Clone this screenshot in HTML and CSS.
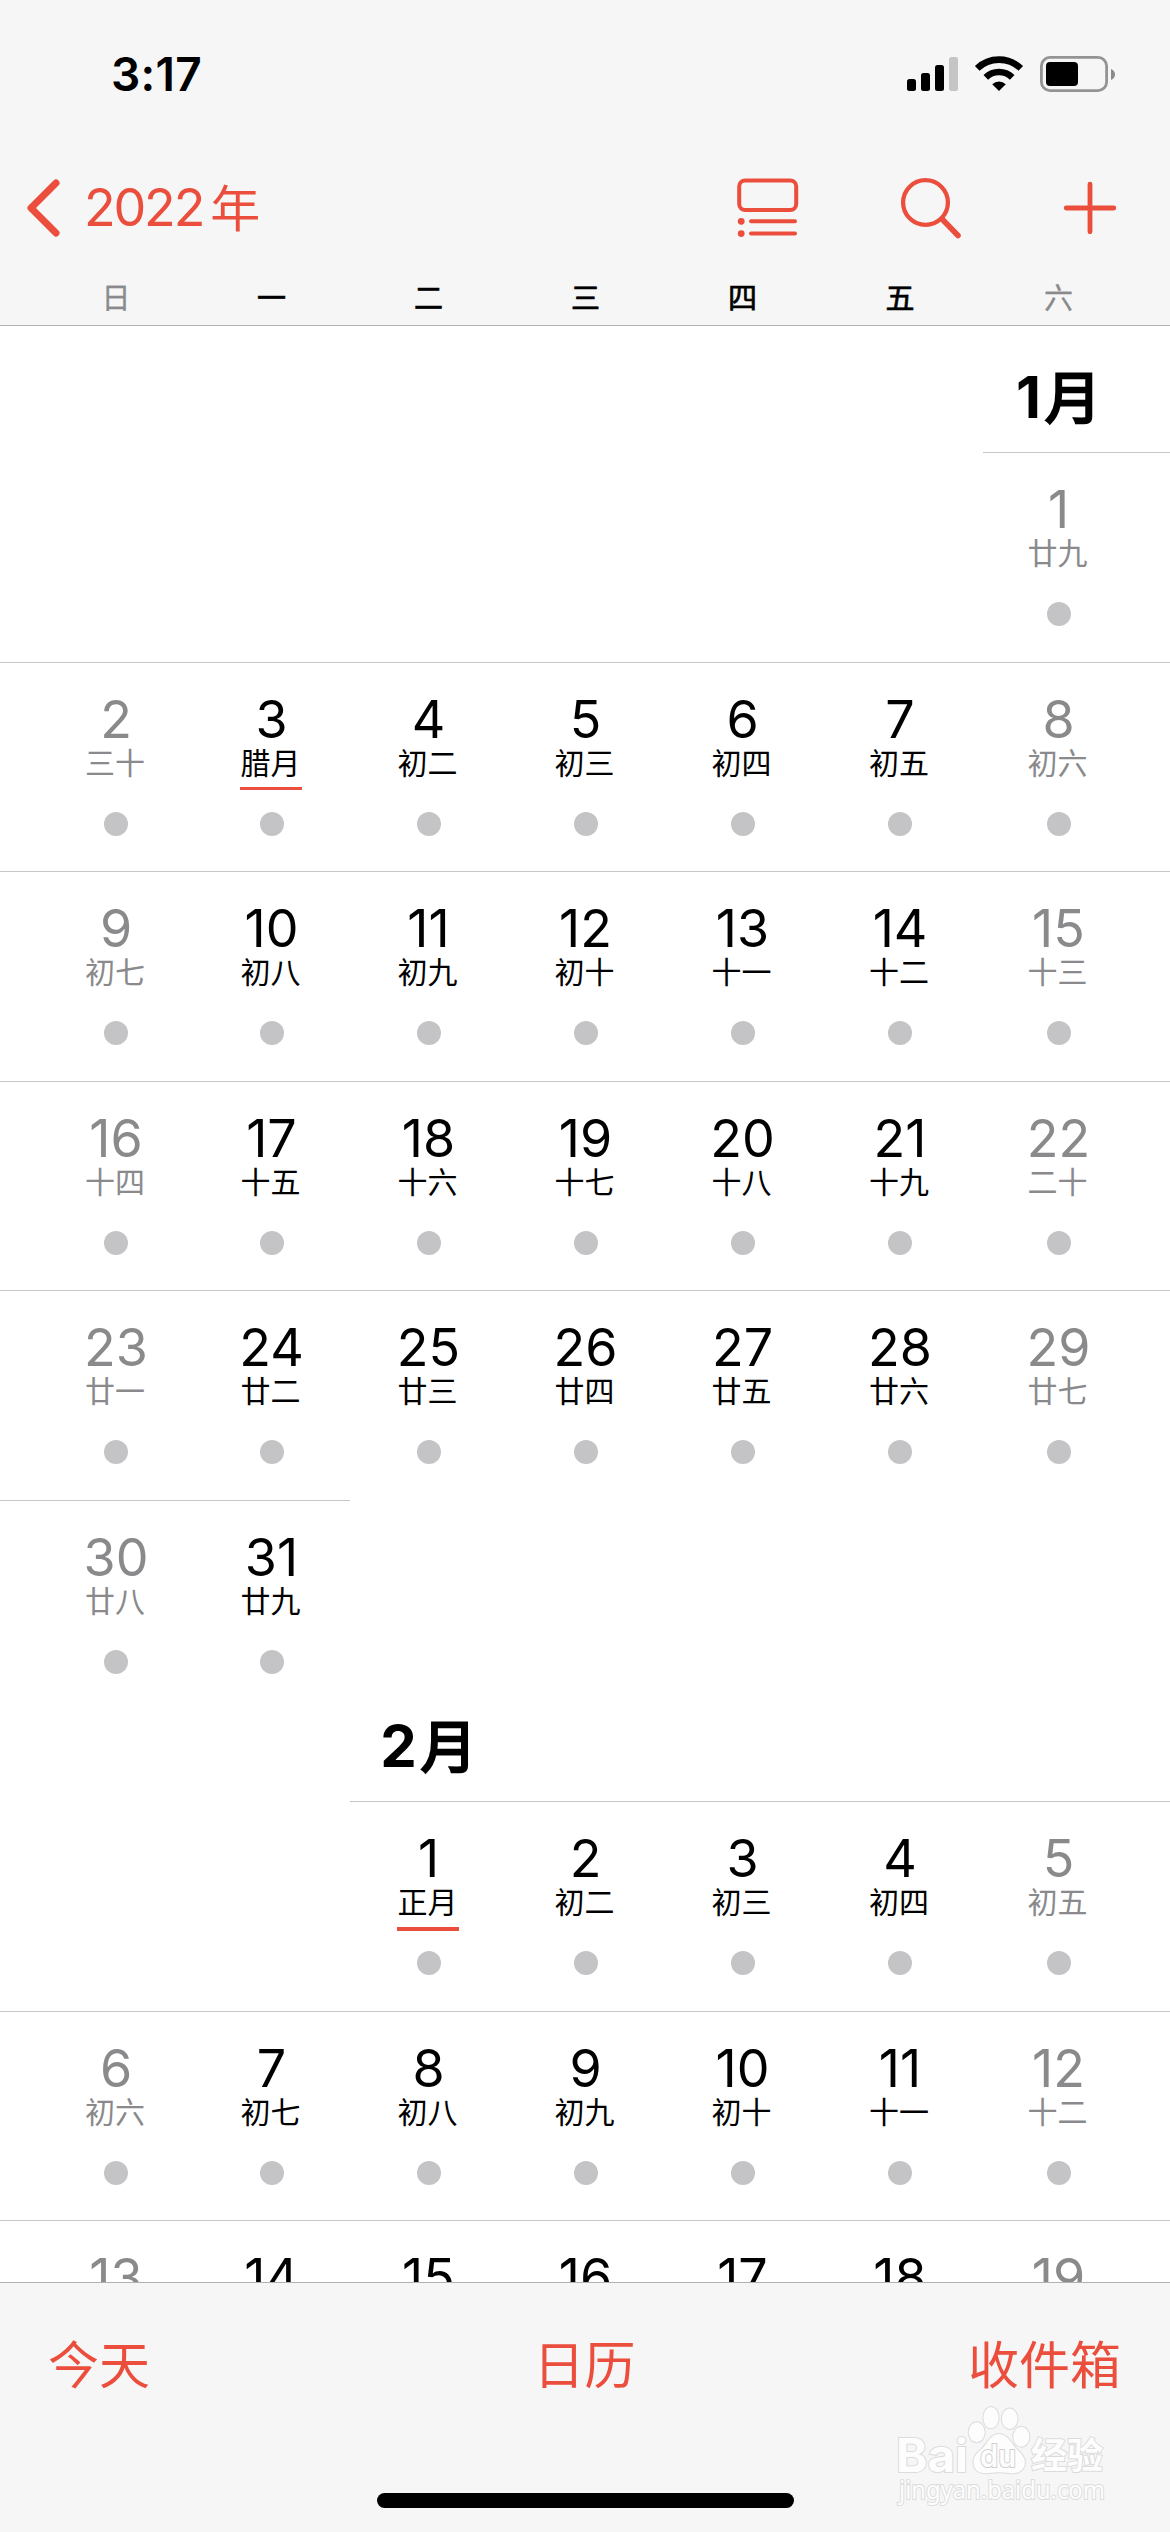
FILE: index.html
```html
<!DOCTYPE html>
<html lang="zh-CN">
<head>
<meta charset="UTF-8">
<meta name="viewport" content="width=device-width, initial-scale=1.0">
<title>日历</title>
<link rel="stylesheet" href="styles.css">
</head>
<body>
<div class="phone">
  <header>
    <div class="status">
      <span class="time">3:17</span>
      <svg class="status-icons" width="210" height="38" viewBox="0 0 210 38">
        <rect x="2" y="24" width="9" height="12" rx="2.5"/>
        <rect x="16" y="18" width="9" height="18" rx="2.5"/>
        <rect x="30" y="10" width="9" height="26" rx="2.5"/>
        <rect x="44" y="2" width="9" height="34" rx="2.5" fill="#c5c5c5"/>
        <g fill="none" stroke="#000" stroke-width="6.6">
          <path d="M72.2 13.4a31.5 31.5 0 0 1 43.6 0"/>
          <path d="M80.8 22.3a19 19 0 0 1 26.4 0"/>
        </g>
        <path d="M87.2 29.2a10 10 0 0 1 13.6 0L94 36z"/>
        <rect x="136.4" y="2.4" width="65.2" height="33.2" rx="8.5" fill="none" stroke="#949494" stroke-width="2.8"/>
        <rect x="141" y="7" width="32" height="24" rx="4"/>
        <path d="M206 14q4 1.6 4 5.5t-4 5.5z" fill="#8a8a8a"/>
      </svg>
    </div>
    <nav>
      <a class="back">
        <svg width="36" height="60" viewBox="0 0 36 60"><path d="M31 5 6 30l25 25" fill="none" stroke="currentColor" stroke-width="7" stroke-linecap="round" stroke-linejoin="round"/></svg>
        <span class="year">2022</span><span class="nian">年</span>
      </a>
      <div class="actions">
        <svg width="62" height="60" viewBox="0 0 62 60" fill="none" stroke="currentColor" stroke-width="4">
          <rect x="2.2" y="2.5" width="57" height="29.5" rx="6"/>
          <path d="M14 43.3h44M14 55.6h44" stroke-linecap="round"/>
          <circle cx="4.2" cy="43.3" r="3.4" fill="currentColor" stroke="none"/>
          <circle cx="4.2" cy="55.6" r="3.4" fill="currentColor" stroke="none"/>
        </svg>
        <svg width="62" height="62" viewBox="0 0 62 62" fill="none" stroke="currentColor" stroke-linecap="round">
          <circle cx="25.5" cy="25.5" r="22.4" stroke-width="4.3"/>
          <path d="m42.5 42.5 15.5 16" stroke-width="5.6"/>
        </svg>
        <svg width="54" height="54" viewBox="0 0 54 54"><path d="M27 3.2v47.6M3.2 27h47.6" fill="none" stroke="currentColor" stroke-width="4.8" stroke-linecap="round"/></svg>
      </div>
    </nav>
    <div class="weekdays row">
      <span class="off">日</span><span>一</span><span>二</span><span>三</span><span>四</span><span>五</span><span class="off">六</span>
    </div>
  </header>

  <main>
    <section class="month january">
      <div class="row title"><h2>1<b>月</b></h2></div>
      <div class="row week">
        <div class="day off first"><span class="num">1</span><span class="lunar">廿九</span><i></i></div>
      </div>
      <div class="row week">
        <div class="day off"><span class="num">2</span><span class="lunar">三十</span><i></i></div>
        <div class="day"><span class="num">3</span><span class="lunar mark">腊月</span><i></i></div>
        <div class="day"><span class="num">4</span><span class="lunar">初二</span><i></i></div>
        <div class="day"><span class="num">5</span><span class="lunar">初三</span><i></i></div>
        <div class="day"><span class="num">6</span><span class="lunar">初四</span><i></i></div>
        <div class="day"><span class="num">7</span><span class="lunar">初五</span><i></i></div>
        <div class="day off"><span class="num">8</span><span class="lunar">初六</span><i></i></div>
      </div>
      <div class="row week">
        <div class="day off"><span class="num">9</span><span class="lunar">初七</span><i></i></div>
        <div class="day"><span class="num">10</span><span class="lunar">初八</span><i></i></div>
        <div class="day"><span class="num">11</span><span class="lunar">初九</span><i></i></div>
        <div class="day"><span class="num">12</span><span class="lunar">初十</span><i></i></div>
        <div class="day"><span class="num">13</span><span class="lunar">十一</span><i></i></div>
        <div class="day"><span class="num">14</span><span class="lunar">十二</span><i></i></div>
        <div class="day off"><span class="num">15</span><span class="lunar">十三</span><i></i></div>
      </div>
      <div class="row week">
        <div class="day off"><span class="num">16</span><span class="lunar">十四</span><i></i></div>
        <div class="day"><span class="num">17</span><span class="lunar">十五</span><i></i></div>
        <div class="day"><span class="num">18</span><span class="lunar">十六</span><i></i></div>
        <div class="day"><span class="num">19</span><span class="lunar">十七</span><i></i></div>
        <div class="day"><span class="num">20</span><span class="lunar">十八</span><i></i></div>
        <div class="day"><span class="num">21</span><span class="lunar">十九</span><i></i></div>
        <div class="day off"><span class="num">22</span><span class="lunar">二十</span><i></i></div>
      </div>
      <div class="row week">
        <div class="day off"><span class="num">23</span><span class="lunar">廿一</span><i></i></div>
        <div class="day"><span class="num">24</span><span class="lunar">廿二</span><i></i></div>
        <div class="day"><span class="num">25</span><span class="lunar">廿三</span><i></i></div>
        <div class="day"><span class="num">26</span><span class="lunar">廿四</span><i></i></div>
        <div class="day"><span class="num">27</span><span class="lunar">廿五</span><i></i></div>
        <div class="day"><span class="num">28</span><span class="lunar">廿六</span><i></i></div>
        <div class="day off"><span class="num">29</span><span class="lunar">廿七</span><i></i></div>
      </div>
      <div class="row week">
        <div class="day off"><span class="num">30</span><span class="lunar">廿八</span><i></i></div>
        <div class="day"><span class="num">31</span><span class="lunar">廿九</span><i></i></div>
      </div>
    </section>

    <section class="month february">
      <div class="row title"><h2>2<b>月</b></h2></div>
      <div class="row week">
        <div class="day first"><span class="num">1</span><span class="lunar mark new-year">正月</span><i></i></div>
        <div class="day"><span class="num">2</span><span class="lunar">初二</span><i></i></div>
        <div class="day"><span class="num">3</span><span class="lunar">初三</span><i></i></div>
        <div class="day"><span class="num">4</span><span class="lunar">初四</span><i></i></div>
        <div class="day off"><span class="num">5</span><span class="lunar">初五</span><i></i></div>
      </div>
      <div class="row week">
        <div class="day off"><span class="num">6</span><span class="lunar">初六</span><i></i></div>
        <div class="day"><span class="num">7</span><span class="lunar">初七</span><i></i></div>
        <div class="day"><span class="num">8</span><span class="lunar">初八</span><i></i></div>
        <div class="day"><span class="num">9</span><span class="lunar">初九</span><i></i></div>
        <div class="day"><span class="num">10</span><span class="lunar">初十</span><i></i></div>
        <div class="day"><span class="num">11</span><span class="lunar">十一</span><i></i></div>
        <div class="day off"><span class="num">12</span><span class="lunar">十二</span><i></i></div>
      </div>
      <div class="row week">
        <div class="day off"><span class="num">13</span></div>
        <div class="day"><span class="num">14</span></div>
        <div class="day"><span class="num">15</span></div>
        <div class="day"><span class="num">16</span></div>
        <div class="day"><span class="num">17</span></div>
        <div class="day"><span class="num">18</span></div>
        <div class="day off"><span class="num">19</span></div>
      </div>
    </section>
  </main>

  <footer>
    <div class="toolbar"><a>今天</a><a>日历</a><a>收件箱</a></div>
    <div class="home-bar"></div>
    <svg class="watermark" width="280" height="140" viewBox="0 0 280 140">
      <g class="wm">
        <text x="36" y="91.5" font-size="46" font-weight="700" textLength="72" lengthAdjust="spacingAndGlyphs">Bai</text>
        <ellipse cx="116.7" cy="52.3" rx="8" ry="10"/>
        <ellipse cx="131" cy="37.7" rx="7.6" ry="10.6"/>
        <ellipse cx="149.7" cy="38.7" rx="7.8" ry="10.2"/>
        <ellipse cx="161.3" cy="56.7" rx="8" ry="10"/>
        <path d="M138.7 54c9 0 12 9 18 15 5 5 9 9 8 15-1 8-9 10-15 9-7-1-14-1-21 0-7 1-14-1-15-9-1-7 3-11 8-15 6-6 9-15 17-15z"/>
        <text class="du" x="120" y="87" font-size="31" font-weight="600" textLength="36" lengthAdjust="spacingAndGlyphs">du</text>
        <text class="cjk" x="171" y="89" font-size="36" font-weight="700" textLength="72">经验</text>
        <text class="url" x="39" y="119" font-size="25" textLength="206" lengthAdjust="spacingAndGlyphs">jingyan.baidu.com</text>
      </g>
    </svg>
  </footer>
</div>
</body>
</html>
```
FILE: styles.css
```css
:root {
  --red: #eb4e3d; --bar: #f6f6f6; --gray: #8a8a8c;
  --line: #c6c6c8; --bar-line: #b2b2b4; --dot: #c4c4c6;
}
* { box-sizing: border-box; margin: 0; padding: 0; }
body { font-family: Inter, 'Noto Sans CJK SC', sans-serif; background: #fff; color: #000; }
svg { display: block; }

.phone { width: 1170px; height: 2532px; display: flex; flex-direction: column; overflow: hidden; position: relative; }
header { height: 326px; flex-shrink: 0; background: var(--bar); border-bottom: 1px solid var(--bar-line); }

.status { height: 148px; padding: 0 55px 0 111px; display: flex; justify-content: space-between; align-items: center; }
.time { font-size: 46px; font-weight: 600; line-height: 56px; letter-spacing: 0.3px; }

nav { height: 119px; padding: 0 53px 0 25px; display: flex; justify-content: space-between; align-items: center; color: var(--red); }
.back { display: flex; align-items: center; }
.year { font-size: 52px; line-height: 60px; margin-left: 23px; letter-spacing: -2.2px; }
.nian { font-family: 'Noto Sans CJK SC', sans-serif; font-size: 50px; line-height: 60px; margin-left: 7px; padding-bottom: 6px; }
.actions { display: flex; align-items: center; }
.actions svg:nth-child(2) { margin: 0 101px 0 101px; }

/* outer columns also hold the page margins */
.row { display: grid; grid-template-columns: 193px 157px 157px 157px 157px 162px 187px; }
.row > :nth-child(7), .january .title h2, .off.first { padding-right: 36px; }
.row > :nth-child(1):not(.first):not(h2) { padding-left: 39px; }
.row > :nth-child(6) { padding-right: 4px; }

.weekdays { font-family: 'Noto Sans CJK SC', sans-serif; font-size: 29px; line-height: 40px; padding-top: 9px; text-align: center; -webkit-text-stroke: 0.7px; }
.off { color: var(--gray); }
.weekdays .off { -webkit-text-stroke: 0.3px; }

main { flex: 1; overflow: hidden; }
.title { height: 126px; align-items: end; }
.title h2 { font-size: 58px; font-weight: 700; line-height: 70px; padding-bottom: 20px; text-align: center; white-space: nowrap; }
.title b { font-family: 'Noto Sans CJK SC', sans-serif; font-size: 56px; font-weight: 400; line-height: 0; margin-left: 4px; -webkit-text-stroke: 2.6px; }
.january h2, .january .first { grid-column: 7; }
.february h2, .february .first { grid-column: 3; }
.february .title { height: 91.4px; }
.february .week:nth-child(2) .day:last-child { padding-right: 36px; }
.february .week:nth-child(2) .day:nth-child(4) { padding-right: 4px; }

.week { height: 209.6px; }
.day { border-top: 1px solid var(--line); padding-top: 31px; display: flex; flex-direction: column; align-items: center; }
.num { font-size: 52px; line-height: 52px; }
.lunar { font-family: 'Noto Sans CJK SC', sans-serif; font-size: 30px; line-height: 30px; width: 62px; height: 44px; margin-right: 2px; text-align: center; border-bottom: 3px solid transparent; }
.lunar.mark { border-color: var(--red); }
.lunar.new-year { height: 46px; margin-bottom: -2px; border-bottom-width: 4px; }
.day i { width: 24px; height: 24px; border-radius: 50%; background: var(--dot); margin-top: 22px; }

footer { height: 250px; flex-shrink: 0; background: var(--bar); border-top: 1px solid var(--bar-line); display: flex; flex-direction: column; align-items: center; }
.toolbar { width: 100%; padding: 43px 49px 0 48px; display: grid; grid-template-columns: 1fr 1fr 1fr; font-family: 'Noto Sans CJK SC', sans-serif; font-size: 51px; line-height: 72px; color: var(--red); text-align: center; }
.toolbar a:first-child { text-align: left; }
.toolbar a:last-child { text-align: right; }
.home-bar { width: 417px; height: 15px; border-radius: 8px; background: #000; margin-top: 95px; }

.watermark { position: absolute; left: 860px; top: 2380px; }
.wm { fill: #fdfdfd; stroke: #dcdcdc; stroke-width: 2px; paint-order: stroke; font-family: Inter, sans-serif; }
.wm .du { stroke: #d0d0d0; }
.wm .cjk { font-family: 'Noto Sans CJK SC', sans-serif; }
.wm .url { font-family: 'Noto Sans', sans-serif; }
```
